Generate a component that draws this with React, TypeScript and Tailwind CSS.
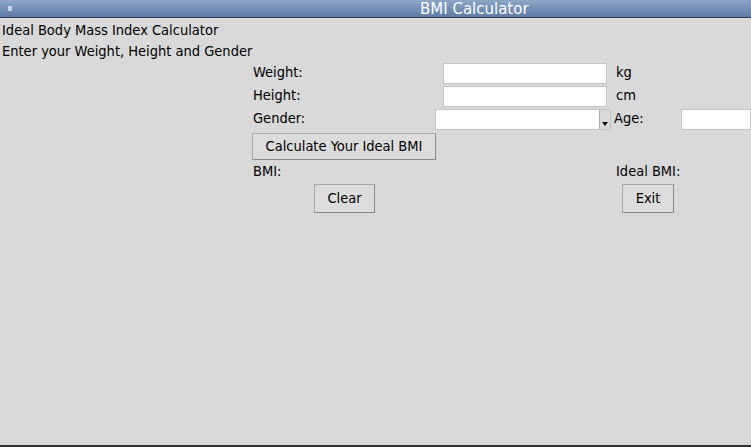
export default function App() {
  const font = { fontFamily: '"DejaVu Sans Condensed", "DejaVu Sans", sans-serif' }
  return (
    <div className="w-[751px] h-[447px] bg-[#d9d9d9] text-[14.5px] text-black flex flex-col overflow-hidden" style={font}>
      <div className="h-[18px] shrink-0 bg-gradient-to-b from-[#8ea6c9] to-[#5f7ca6] border-b border-[#2d3e55] flex items-center relative">
        <div className="w-[4px] h-[5px] bg-[#c8d3e3] ml-[8px]" />
        <div className="absolute left-[420px] top-[-2px] text-white text-[15px]" style={{ fontFamily: '"DejaVu Sans", sans-serif' }}>BMI Calculator</div>
      </div>
      <div className="pl-[2px] mt-[2px] h-[20px] leading-[20px]">Ideal Body Mass Index Calculator</div>
      <div className="pl-[2px] mt-[1px] h-[20px] leading-[20px]">Enter your Weight, Height and Gender</div>
      <div className="flex items-center h-[22px] mt-[1px]">
        <span className="ml-[253px] w-[190px]">Weight:</span>
        <div className="w-[164px] h-[21px] bg-white border border-[#c4c4c4]" />
        <span className="ml-[9px]">kg</span>
      </div>
      <div className="flex items-center h-[22px] mt-[1px]">
        <span className="ml-[253px] w-[190px]">Height:</span>
        <div className="w-[164px] h-[21px] bg-white border border-[#c4c4c4]" />
        <span className="ml-[9px]">cm</span>
      </div>
      <div className="flex items-center h-[22px] mt-[1px]">
        <span className="ml-[253px] w-[184px]">Gender:</span>
        <div className="w-[176px] h-[21px] shrink-0 bg-white border border-[#c4c4c4] flex justify-end">
          <div className="w-[11px] h-full bg-[#d9d9d9] border-l border-[#aaa] flex items-end justify-center pb-[3px]">
            <div className="w-0 h-0 border-l-[3px] border-r-[3px] border-t-[4px] border-l-transparent border-r-transparent border-t-black" />
          </div>
        </div>
        <span className="ml-[3px] w-[67px] shrink-0">Age:</span>
        <div className="w-[70px] h-[21px] shrink-0 bg-white border border-[#c4c4c4]" />
      </div>
      <div className="flex h-[27px] mt-[3px]">
        <button className="ml-[252px] w-[184px] h-[27px] bg-[#dcdcdc] border border-[#a8a8a8] border-r-[#8a8a8a] border-b-[#8a8a8a]">Calculate Your Ideal BMI</button>
      </div>
      <div className="flex items-center h-[20px] mt-[2px]">
        <span className="ml-[253px] w-[363px]">BMI:</span>
        <span>Ideal BMI:</span>
      </div>
      <div className="flex h-[29px] mt-[2px]">
        <button className="ml-[314px] w-[61px] h-[29px] bg-[#dcdcdc] border border-[#a8a8a8] border-r-[#8a8a8a] border-b-[#8a8a8a]">Clear</button>
        <button className="ml-[247px] w-[52px] h-[29px] bg-[#dcdcdc] border border-[#a8a8a8] border-r-[#8a8a8a] border-b-[#8a8a8a]">Exit</button>
      </div>
      <div className="flex-1" />
      <div className="h-[2px] bg-[#333]" />
    </div>
  )
}
